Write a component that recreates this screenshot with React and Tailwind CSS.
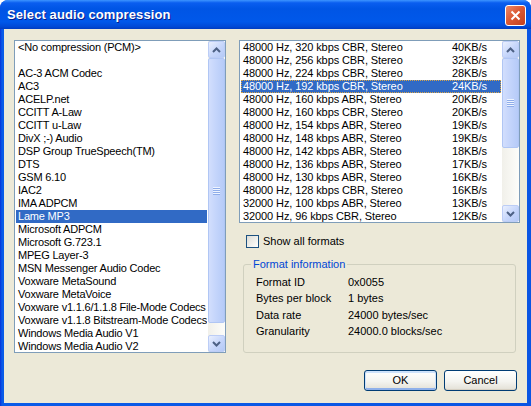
import React from "react";

const leftItems = [
  "<No compression (PCM)>",
  "",
  "AC-3 ACM Codec",
  "AC3",
  "ACELP.net",
  "CCITT A-Law",
  "CCITT u-Law",
  "DivX ;-) Audio",
  "DSP Group TrueSpeech(TM)",
  "DTS",
  "GSM 6.10",
  "IAC2",
  "IMA ADPCM",
  "Lame MP3",
  "Microsoft ADPCM",
  "Microsoft G.723.1",
  "MPEG Layer-3",
  "MSN Messenger Audio Codec",
  "Voxware MetaSound",
  "Voxware MetaVoice",
  "Voxware v1.1.6/1.1.8 File-Mode Codecs",
  "Voxware v1.1.8 Bitstream-Mode Codecs",
  "Windows Media Audio V1",
  "Windows Media Audio V2",
];

const formats = [
  ["48000 Hz, 320 kbps CBR, Stereo", "40KB/s"],
  ["48000 Hz, 256 kbps CBR, Stereo", "32KB/s"],
  ["48000 Hz, 224 kbps CBR, Stereo", "28KB/s"],
  ["48000 Hz, 192 kbps CBR, Stereo", "24KB/s"],
  ["48000 Hz, 160 kbps ABR, Stereo", "20KB/s"],
  ["48000 Hz, 160 kbps CBR, Stereo", "20KB/s"],
  ["48000 Hz, 154 kbps ABR, Stereo", "19KB/s"],
  ["48000 Hz, 148 kbps ABR, Stereo", "19KB/s"],
  ["48000 Hz, 142 kbps ABR, Stereo", "18KB/s"],
  ["48000 Hz, 136 kbps ABR, Stereo", "17KB/s"],
  ["48000 Hz, 130 kbps ABR, Stereo", "16KB/s"],
  ["48000 Hz, 128 kbps CBR, Stereo", "16KB/s"],
  ["32000 Hz, 100 kbps ABR, Stereo", "13KB/s"],
  ["32000 Hz, 96 kbps CBR, Stereo", "12KB/s"],
];

function Arrow({ dir }) {
  return (
    <div className="w-[17px] h-[17px] shrink-0 rounded-[2px] border border-[#bccdf6] bg-[linear-gradient(135deg,#eaf0fe,#c6d6fb_55%,#b4c9f6)] flex items-center justify-center">
      <svg width="9" height="6" viewBox="0 0 9 6">
        <path
          d={dir === "up" ? "M1 5 L4.5 1.5 L8 5" : "M1 1 L4.5 4.5 L8 1"}
          fill="none"
          stroke="#4d6185"
          strokeWidth="2"
        />
      </svg>
    </div>
  );
}

function ScrollBar({ thumb }) {
  return (
    <div className="w-[17px] h-full shrink-0 flex flex-col bg-[linear-gradient(90deg,#f1f0ea,#fdfdfa)]">
      <Arrow dir="up" />
      <div
        className="w-[17px] shrink-0 rounded-[2px] border border-[#b0c6f4] bg-[linear-gradient(90deg,#d2defd,#c3d4fb_50%,#b6cbf8)] flex flex-col items-center justify-center"
        style={{ height: thumb }}
      >
        {[0, 1, 2, 3].map((i) => (
          <div key={i} className="w-[7px] h-[2px] border-t border-b border-t-[#eef4ff] border-b-[#8fadea]" />
        ))}
      </div>
      <div className="flex-1" />
      <Arrow dir="down" />
    </div>
  );
}

export default function App() {
  return (
    <div className="w-[531px] h-[406px] bg-white font-['Liberation_Sans',Arial,sans-serif] text-[11px] text-black">
      <div className="w-full h-full rounded-t-[8px] overflow-hidden flex flex-col bg-[linear-gradient(90deg,#0831d9,#0a5be8_2px,#0a55e3)]">
        {/* Title bar */}
        <div className="h-[29px] shrink-0 flex items-center pl-[7px] pr-[5px] bg-[linear-gradient(180deg,#3d95ff_0%,#0a5eef_10%,#0055e5_30%,#0058ea_75%,#0049d6_92%,#003cc0_100%)]">
          <div className="flex-1 pt-[1px] text-[13px] font-bold text-white tracking-[0.1px] [text-shadow:1px_1px_0_#0a1d8a]">
            Select audio compression
          </div>
          <div className="w-[21px] h-[21px] mt-[2px] rounded-[3px] border border-white bg-[linear-gradient(135deg,#eb8a6a,#dc5a35_45%,#c3401c)] flex items-center justify-center">
            <svg width="11" height="11" viewBox="0 0 11 11">
              <path d="M1.5 1.5 L9.5 9.5 M9.5 1.5 L1.5 9.5" stroke="white" strokeWidth="2" />
            </svg>
          </div>
        </div>

        {/* Client */}
        <div className="flex-1 mx-[4px] mb-[3px] bg-[#ece9d8] flex flex-col pt-[11px] pl-[10px]">
          <div className="flex gap-[13px]">
            {/* Codec list */}
            <div className="w-[212px] h-[313px] border border-[#7f9db9] bg-white flex">
              <div className="flex-1 min-w-0 overflow-hidden tracking-[-0.2px]">
                {leftItems.map((t, i) => (
                  <div
                    key={i}
                    className={
                      "mx-[1px] h-[13px] leading-[13px] pl-[2px] whitespace-nowrap overflow-hidden " +
                      (t === "Lame MP3" ? "bg-[#316ac5] text-white" : "")
                    }
                  >
                    {t}
                  </div>
                ))}
              </div>
              <ScrollBar thumb={265} />
            </div>

            {/* Right column */}
            <div className="w-[281px] flex flex-col">
              <div className="h-[183px] border border-[#7f9db9] bg-white flex">
                <div className="flex-1 min-w-0 overflow-hidden tracking-[-0.1px]">
                  {formats.map(([a, b], i) => (
                    <div
                      key={i}
                      className={
                        "mx-[1px] h-[13px] leading-[11px] pl-[1px] flex whitespace-nowrap border " +
                        (i === 3
                          ? "bg-[#316ac5] text-white border-dotted border-[#d8a448]"
                          : "border-transparent")
                      }
                    >
                      <span className="w-[209px] shrink-0">{a}</span>
                      <span>{b}</span>
                    </div>
                  ))}
                </div>
                <ScrollBar thumb={90} />
              </div>

              <div className="mt-[12px] ml-[7px] flex items-center gap-[4px] h-[13px]">
                <div className="w-[13px] h-[13px] border border-[#1c5180] bg-[linear-gradient(135deg,#dcdcd7,#f5f5f1_70%,#ffffff)]" />
                <span className="leading-[13px]">Show all formats</span>
              </div>

              <fieldset className="mt-[10px] ml-[4px] w-[273px] h-[95px] border border-[#d0d0bf] rounded-[3px] pl-[12px] pt-[3px]">
                <legend className="-ml-[5px] px-[2px] text-[#0046d5] leading-[13px]">Format information</legend>
                {[
                  ["Format ID", "0x0055"],
                  ["Bytes per block", "1 bytes"],
                  ["Data rate", "24000 bytes/sec"],
                  ["Granularity", "24000.0 blocks/sec"],
                ].map(([k, v]) => (
                  <div key={k} className="flex h-[16.3px] leading-[16px]">
                    <span className="w-[92px] shrink-0">{k}</span>
                    <span>{v}</span>
                  </div>
                ))}
              </fieldset>
            </div>
          </div>

          {/* Buttons */}
          <div className="mt-[17px] pr-[10px] flex justify-end gap-[7px]">
            <button className="w-[73px] h-[21px] rounded-[3px] border border-[#003c74] bg-[linear-gradient(180deg,#ffffff,#f4f4f0_55%,#e3e0d6)] shadow-[inset_0_1px_0_1px_#cee2fb,inset_0_-1px_0_1px_#8fb0ea] leading-[19px]">
              OK
            </button>
            <button className="w-[73px] h-[21px] rounded-[3px] border border-[#003c74] bg-[linear-gradient(180deg,#ffffff,#f4f4f0_55%,#e3e0d6)] shadow-[inset_0_-1px_0_0_#d6d0c3] leading-[19px]">
              Cancel
            </button>
          </div>
        </div>
      </div>
    </div>
  );
}
